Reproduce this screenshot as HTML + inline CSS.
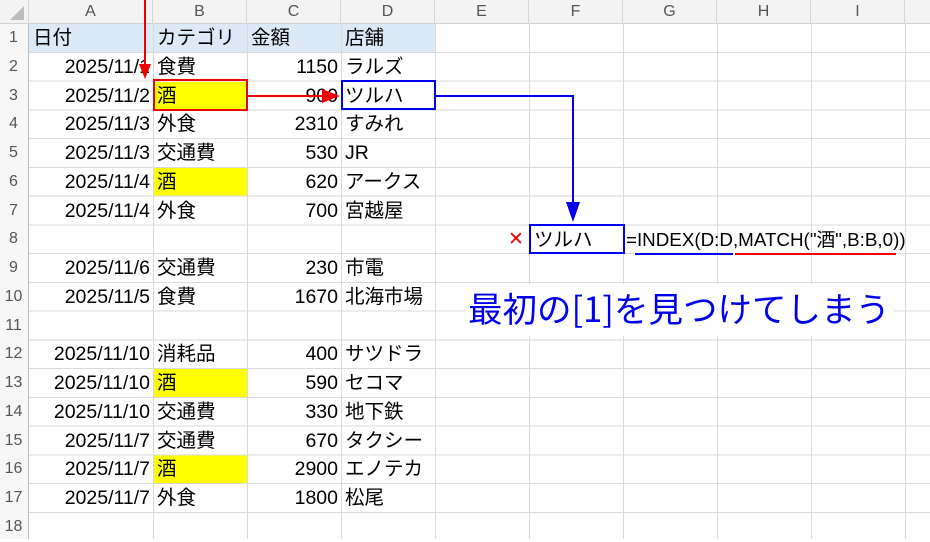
<!DOCTYPE html>
<html><head><meta charset="utf-8"><style>
html,body{margin:0;padding:0;background:#fff;}
body{width:930px;height:539px;position:relative;overflow:hidden;font-family:"Liberation Sans","Noto Sans CJK JP",sans-serif;}
.colhdr{position:absolute;top:0;left:0;width:930px;height:24px;background:#f3f3f3;border-bottom:1px solid #cfcfcf;box-sizing:border-box;}
.ch{position:absolute;top:0;height:24px;line-height:24px;text-align:center;color:#555;font-size:16px;border-right:1px solid #d6d6d6;box-sizing:border-box;}
.rowhdr{position:absolute;left:0;top:24px;width:29px;height:515px;background:#f7f7f7;border-right:1px solid #bdbdbd;box-sizing:border-box;}
.grid{position:absolute;left:29px;top:24px;width:901px;height:515px;
background-image:repeating-linear-gradient(to bottom,transparent 0,transparent 27.75px,#dadada 27.75px,#dadada 28.75px);}
.vl{position:absolute;top:24px;height:515px;width:1px;background:#dadada;}
.r{position:absolute;left:0;width:930px;height:28.75px;line-height:28.75px;font-size:19.5px;color:#000;}
.r span{position:absolute;top:0;white-space:nowrap;}
.n{left:0;width:27px;text-align:center;color:#555;font-size:16px !important;}
.a{right:calc(930px - 150px);}
.b{left:157px;}
.c{right:calc(930px - 338px);}
.d{left:345px;}
.y{position:absolute;left:153px;width:94px;height:28px;background:#ffff00;}
</style></head><body>
<div class="colhdr">
<div class="ch" style="left:0;width:29px;"><svg width="29" height="24"><polygon points="24,6 24,20 10,20" fill="#bdbdbd"/></svg></div>
<div class="ch" style="left:29px;width:124px;">A</div>
<div class="ch" style="left:153px;width:94px;">B</div>
<div class="ch" style="left:247px;width:94px;">C</div>
<div class="ch" style="left:341px;width:94px;">D</div>
<div class="ch" style="left:435px;width:94px;">E</div>
<div class="ch" style="left:529px;width:94px;">F</div>
<div class="ch" style="left:623px;width:94px;">G</div>
<div class="ch" style="left:717px;width:94px;">H</div>
<div class="ch" style="left:811px;width:94px;">I</div>
</div>
<div class="rowhdr"></div>
<div style="position:absolute;left:29px;top:24px;width:406px;height:28px;background:#dce9f7;"></div>
<div class="y" style="top:82px;"></div>
<div class="y" style="top:168px;"></div>
<div class="y" style="top:369px;"></div>
<div class="y" style="top:455px;"></div>
<div class="grid"></div>
<div class="vl" style="left:153px"></div><div class="vl" style="left:247px"></div><div class="vl" style="left:341px"></div><div class="vl" style="left:435px"></div><div class="vl" style="left:529px"></div><div class="vl" style="left:623px"></div><div class="vl" style="left:717px"></div><div class="vl" style="left:811px"></div><div class="vl" style="left:905px"></div>

<div class="r" style="top:24px"><span class="n">1</span><span style="left:33px">日付</span><span class="b">カテゴリ</span><span style="left:251px">金額</span><span class="d">店舗</span></div>
<div class="r" style="top:52.75px"><span class="n">2</span><span class="a">2025/11/1</span><span class="b">食費</span><span class="c">1150</span><span class="d">ラルズ</span></div>
<div class="r" style="top:81.5px"><span class="n">3</span><span class="a">2025/11/2</span><span class="b">酒</span><span class="c">900</span><span class="d">ツルハ</span></div>
<div class="r" style="top:110.25px"><span class="n">4</span><span class="a">2025/11/3</span><span class="b">外食</span><span class="c">2310</span><span class="d">すみれ</span></div>
<div class="r" style="top:139px"><span class="n">5</span><span class="a">2025/11/3</span><span class="b">交通費</span><span class="c">530</span><span class="d">JR</span></div>
<div class="r" style="top:167.75px"><span class="n">6</span><span class="a">2025/11/4</span><span class="b">酒</span><span class="c">620</span><span class="d">アークス</span></div>
<div class="r" style="top:196.5px"><span class="n">7</span><span class="a">2025/11/4</span><span class="b">外食</span><span class="c">700</span><span class="d">宮越屋</span></div>
<div class="r" style="top:225.25px"><span class="n">8</span></div>
<div class="r" style="top:254px"><span class="n">9</span><span class="a">2025/11/6</span><span class="b">交通費</span><span class="c">230</span><span class="d">市電</span></div>
<div class="r" style="top:282.75px"><span class="n">10</span><span class="a">2025/11/5</span><span class="b">食費</span><span class="c">1670</span><span class="d">北海市場</span></div>
<div class="r" style="top:311.5px"><span class="n">11</span></div>
<div class="r" style="top:340.25px"><span class="n">12</span><span class="a">2025/11/10</span><span class="b">消耗品</span><span class="c">400</span><span class="d">サツドラ</span></div>
<div class="r" style="top:369px"><span class="n">13</span><span class="a">2025/11/10</span><span class="b">酒</span><span class="c">590</span><span class="d">セコマ</span></div>
<div class="r" style="top:397.75px"><span class="n">14</span><span class="a">2025/11/10</span><span class="b">交通費</span><span class="c">330</span><span class="d">地下鉄</span></div>
<div class="r" style="top:426.5px"><span class="n">15</span><span class="a">2025/11/7</span><span class="b">交通費</span><span class="c">670</span><span class="d">タクシー</span></div>
<div class="r" style="top:455.25px"><span class="n">16</span><span class="a">2025/11/7</span><span class="b">酒</span><span class="c">2900</span><span class="d">エノテカ</span></div>
<div class="r" style="top:484px"><span class="n">17</span><span class="a">2025/11/7</span><span class="b">外食</span><span class="c">1800</span><span class="d">松尾</span></div>
<div class="r" style="top:512.75px"><span class="n">18</span></div>

<div style="position:absolute;left:466px;top:284px;width:428px;height:52px;background:#fff;"></div>
<div style="position:absolute;left:468px;top:282px;height:50px;line-height:50px;font-size:34.5px;color:#0000ee;white-space:nowrap;font-family:'Noto Sans CJK JP',sans-serif;">最初の[1]を見つけてしまう</div>

<div style="position:absolute;left:508px;top:226px;line-height:28px;font-size:19px;color:#e00;">✕</div>
<div style="position:absolute;left:534px;top:226px;line-height:28px;font-size:19.5px;">ツルハ</div>
<div style="position:absolute;left:626px;top:226px;line-height:28px;font-size:18.8px;white-space:nowrap;">=INDEX(D:D,MATCH("酒",B:B,0))</div>
<div style="position:absolute;left:635px;top:253px;width:98px;height:2px;background:#0000ee;"></div>
<div style="position:absolute;left:735px;top:253px;width:161px;height:2px;background:#ee0000;"></div>

<svg style="position:absolute;left:0;top:0" width="930" height="539">
<rect x="154" y="80" width="93" height="30" fill="none" stroke="#ee0000" stroke-width="2"/>
<rect x="342" y="81" width="93" height="28" fill="none" stroke="#0000ee" stroke-width="2"/>
<rect x="530" y="225" width="94" height="28" fill="none" stroke="#0000ee" stroke-width="2"/>
<line x1="145" y1="0" x2="145" y2="66" stroke="#ee0000" stroke-width="2"/>
<polygon points="139,64 151,64 145,79" fill="#ee0000"/>
<line x1="248" y1="96" x2="324" y2="96" stroke="#ee0000" stroke-width="2"/>
<polygon points="322,89 322,103 340,96" fill="#ee0000"/>
<polyline points="436,96 573,96 573,205" fill="none" stroke="#0000ee" stroke-width="2"/>
<polygon points="566,202 580,202 573,222" fill="#0000ee"/>
</svg>
</body></html>
